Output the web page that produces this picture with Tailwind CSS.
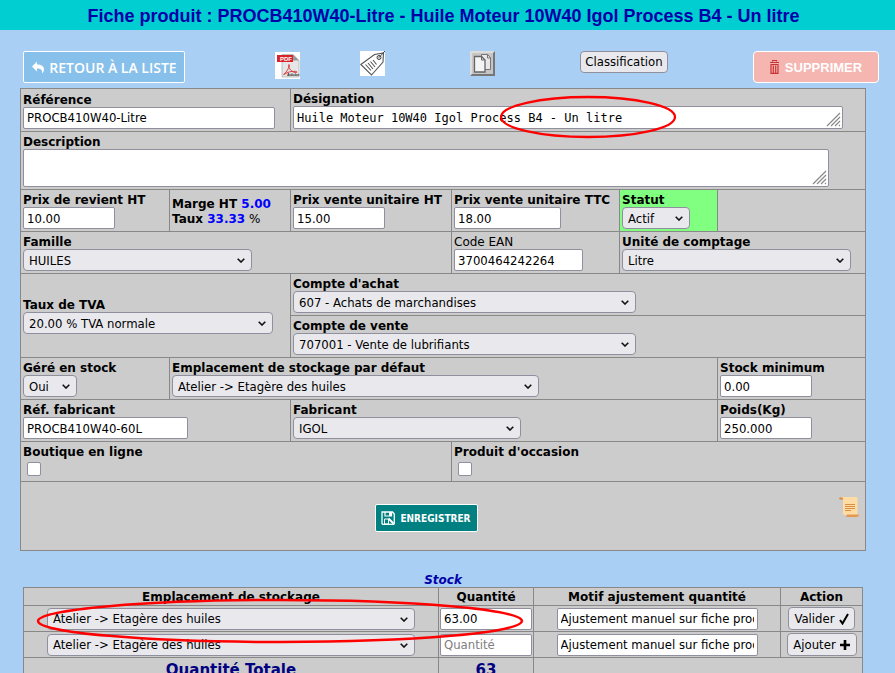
<!DOCTYPE html>
<html lang="fr">
  <head>
    <meta charset="UTF-8" />
    <meta name="viewport" content="width=device-width, initial-scale=1.0" />
    <title>Fiche produit</title>
    <script src="https://cdn.jsdelivr.net/npm/@tailwindcss/browser@4"></script>
    <style>
      body {
        font-family: 'DejaVu Sans', Verdana, sans-serif;
      }
      input,
      select,
      .btn {
        font-family: 'DejaVu Sans Condensed', Tahoma, sans-serif;
      }
      textarea {
        font-family: 'DejaVu Sans Mono', monospace;
      }
    </style>
  </head>
  <body class="relative min-h-screen overflow-x-hidden bg-[#a9cff5] text-[12px] leading-[15px] text-black">
    <!-- symboles communs -->
    <svg class="hidden">
      <symbol id="chevron" viewBox="0 0 8 5">
        <path d="M.7 .7L4 4l3.300-3.300" fill="none" stroke="#111" stroke-width="1.600" />
      </symbol>
      <symbol id="grip" viewBox="0 0 15 15">
        <path d="M1 14L14 1M5 14l9-9M9 14l5-5M13 14l1-1" fill="none" stroke="#888" stroke-width="1.200" />
      </symbol>
    </svg>

    <h1 class="h-[30px] bg-[#00ced1] pr-2 text-center font-['Liberation_Sans'] text-[18px] leading-[32px] font-bold text-[#0000a8]">
      Fiche produit : PROCB410W40-Litre - Huile Moteur 10W40 Igol Process B4 - Un litre
    </h1>

    <!-- Barre d'actions -->
    <nav class="mt-[21px] mr-4 ml-[23px] grid grid-cols-[252px_85px_110px_110px_1fr_126px] items-start">
      <a href="#" class="flex h-8 w-[162px] items-center justify-center gap-1 rounded-[2px] border border-white bg-[#87c0ea] font-['Open_Sans'] text-[14px] font-semibold whitespace-nowrap text-white">
        <svg class="h-[14px] w-[14px] shrink-0" viewBox="0 0 14 14">
          <path d="M6 1.500v3c4.500 0 7 1.500 7 5 0 1.700-.8 3-2 4 .6-3.400-.9-5-5-5v3L1 6.500z" fill="#fff" />
        </svg>
        RETOUR À LA LISTE
      </a>
      <a href="#" aria-label="PDF" class="mt-px block h-[27px] w-[25px]">
        <svg width="25" height="27" viewBox="0 0 25 27">
          <rect width="25" height="27" fill="#fff" />
          <path d="M7 2.500h11l6 6V25H7z" fill="#e6e6e6" stroke="#aaa" stroke-width=".7" />
          <path d="M18 2.500v6h6z" fill="#999" />
          <rect x="2" y="3" width="16" height="7" fill="#d8232a" />
          <text x="5" y="9" font-family="Liberation Sans" font-size="6" font-weight="bold" fill="#fff">PDF</text>
          <path d="M8.500 22.500c2-1 5-5.500 5.800-8.500.5-2-1-2-.7 0 .5 3 3 6 6.400 6.500 2.500.3 3-1 0-1.200-4-.2-8 1-11 3.200z" fill="none" stroke="#d8323a" stroke-width=".9" />
          <text x="12" y="24" font-family="Liberation Sans" font-size="4" font-weight="bold" fill="#333">Adobe</text>
        </svg>
      </a>
      <a href="#" aria-label="Étiquette" class="block h-[25px] w-[25px]">
        <svg width="25" height="25" viewBox="0 0 25 25">
          <rect width="25" height="25" fill="#fff" />
          <path d="M.8 13.500L14.500 3.500l9-1.500-.5 9L11.500 24z" fill="#fff" stroke="#555" stroke-width="1.100" />
          <path d="M5.500 13.500l5.500 6M8 12l5 6M10.500 10.500l4.500 5.500M13 9l3.500 4.500" stroke="#555" stroke-width="1.100" />
          <circle cx="19" cy="6.500" r="2" fill="#ddd" stroke="#444" />
          <path d="M19 6.500L25 0" stroke="#444" />
        </svg>
      </a>
      <a href="#" aria-label="Dupliquer" class="block h-[25px] w-[25px]">
        <svg width="25" height="25" viewBox="0 0 25 25">
          <rect width="25" height="25" fill="#777" />
          <path d="M0 0h25l-2 2H2v21l-2 2z" fill="#ddd" />
          <rect x="2" y="2" width="21" height="21" fill="#c6c6c6" />
          <path d="M11.500 3.500h6l3 3v12h-9z" fill="#e8e8e8" stroke="#777" />
          <path d="M17.500 3.500v3.500h3" fill="none" stroke="#777" />
          <path d="M4.500 5.500h7l3.500 3.500v12H4.500z" fill="#f4f4f4" stroke="#666" stroke-width="1.300" />
          <path d="M11.500 5.500V9H15" fill="none" stroke="#666" />
        </svg>
      </a>
      <div>
        <button class="btn block h-[22px] w-[88px] rounded-[4px] border border-[#8f8f9d] bg-[#e9e9ed] text-[13px] leading-[20px]">Classification</button>
      </div>
      <button class="flex h-8 items-center justify-center gap-[6px] rounded-[4px] border border-white bg-[#f5b5b1] font-['Liberation_Sans'] text-[13px] font-bold text-white">
        <svg class="h-[14px] w-[9px]" viewBox="0 0 9 14">
          <path d="M2.500 1.500V.5h4v1M0 2.500h9M.5 4.500h8" fill="none" stroke="#c93434" stroke-width="1.200" />
          <path d="M1 5v8.400h7V5M3.300 5.500v7.500M5.700 5.500v7.500" fill="none" stroke="#c93434" stroke-width="1.200" />
        </svg>
        SUPPRIMER
      </button>
    </nav>

    <!-- Fiche -->
    <form class="mt-[5px] mr-[29px] ml-5">
      <table class="w-full table-fixed border-collapse bg-[#ccc] [&_input]:block [&_label]:block [&_label]:h-[15px] [&_label]:leading-[17px] [&_label]:font-bold [&_label]:whitespace-nowrap [&_select]:block [&_td]:border [&_td]:border-[#888] [&_td]:p-[2px] [&_textarea]:block">
        <colgroup>
          <col class="w-[149px]" />
          <col class="w-[121px]" />
          <col class="w-[161px]" />
          <col class="w-[168px]" />
          <col class="w-[98px]" />
          <col />
        </colgroup>
        <tr>
          <td colspan="2">
            <label for="reference">Référence</label>
            <input id="reference" value="PROCB410W40-Litre" class="h-[22px] w-[252px] rounded-[2px] border border-[#8f8f9d] bg-white px-[3px] text-[13px]" />
          </td>
          <td colspan="4">
            <label for="designation">Désignation</label>
            <div class="relative w-[550px]">
              <textarea id="designation" rows="1" class="h-[23px] w-full resize-none overflow-hidden rounded-[2px] border border-[#8f8f9d] bg-white px-[3px] pt-1 text-[12px] leading-[15px]">Huile Moteur 10W40 Igol Process B4 - Un litre</textarea>
              <svg class="pointer-events-none absolute right-[2px] bottom-[2px] h-[15px] w-[15px]"><use href="#grip" /></svg>
            </div>
          </td>
        </tr>
        <tr>
          <td colspan="6">
            <label for="description">Description</label>
            <div class="relative w-[806px]">
              <textarea id="description" rows="2" class="h-[38px] w-full resize-none overflow-hidden rounded-[2px] border border-[#8f8f9d] bg-white px-[3px] pt-1 text-[12px] leading-[15px]"></textarea>
              <svg class="pointer-events-none absolute right-[2px] bottom-[2px] h-[15px] w-[15px]"><use href="#grip" /></svg>
            </div>
          </td>
        </tr>
        <tr>
          <td>
            <label for="revient">Prix de revient HT</label>
            <input id="revient" value="10.00" class="h-[22px] w-[92px] rounded-[2px] border border-[#8f8f9d] bg-white px-[3px] text-[13px]" />
          </td>
          <td class="pt-1!">
            <b>Marge HT <span class="text-[#0000ff]">5.00</span></b><br />
            <b>Taux <span class="text-[#0000ff]">33.33</span></b> %
          </td>
          <td>
            <label for="venteht">Prix vente unitaire HT</label>
            <input id="venteht" value="15.00" class="h-[22px] w-[92px] rounded-[2px] border border-[#8f8f9d] bg-white px-[3px] text-[13px]" />
          </td>
          <td>
            <label for="ventettc">Prix vente unitaire TTC</label>
            <input id="ventettc" value="18.00" class="h-[22px] w-[107px] rounded-[2px] border border-[#8f8f9d] bg-white px-[3px] text-[13px]" />
          </td>
          <td class="bg-[#80ff80]">
            <label for="statut">Statut</label>
            <div class="relative w-[68px]">
              <select id="statut" class="h-[22px] w-full appearance-none rounded-[4px] border border-[#8f8f9d] bg-[#e9e9ed] px-[5px] text-[13px]"><option>Actif</option></select>
              <svg class="pointer-events-none absolute top-[9px] right-[7px] h-[5px] w-[8px]"><use href="#chevron" /></svg>
            </div>
          </td>
          <td></td>
        </tr>
        <tr>
          <td colspan="3">
            <label for="famille">Famille</label>
            <div class="relative w-[229px]">
              <select id="famille" class="h-[22px] w-full appearance-none rounded-[4px] border border-[#8f8f9d] bg-[#e9e9ed] px-[5px] text-[13px]"><option>HUILES</option></select>
              <svg class="pointer-events-none absolute top-[9px] right-[7px] h-[5px] w-[8px]"><use href="#chevron" /></svg>
            </div>
          </td>
          <td>
            <label for="ean" class="font-normal!">Code EAN</label>
            <input id="ean" value="3700464242264" class="h-[22px] w-[129px] rounded-[2px] border border-[#8f8f9d] bg-white px-[3px] text-[13px]" />
          </td>
          <td colspan="2">
            <label for="unite">Unité de comptage</label>
            <div class="relative w-[229px]">
              <select id="unite" class="h-[22px] w-full appearance-none rounded-[4px] border border-[#8f8f9d] bg-[#e9e9ed] px-[5px] text-[13px]"><option>Litre</option></select>
              <svg class="pointer-events-none absolute top-[9px] right-[7px] h-[5px] w-[8px]"><use href="#chevron" /></svg>
            </div>
          </td>
        </tr>
        <tr>
          <td colspan="2" rowspan="2">
            <label for="tva">Taux de TVA</label>
            <div class="relative w-[250px]">
              <select id="tva" class="h-[22px] w-full appearance-none rounded-[4px] border border-[#8f8f9d] bg-[#e9e9ed] px-[5px] text-[13px]"><option>20.00 % TVA normale</option></select>
              <svg class="pointer-events-none absolute top-[9px] right-[7px] h-[5px] w-[8px]"><use href="#chevron" /></svg>
            </div>
          </td>
          <td colspan="4">
            <label for="achat">Compte d'achat</label>
            <div class="relative w-[343px]">
              <select id="achat" class="h-[22px] w-full appearance-none rounded-[4px] border border-[#8f8f9d] bg-[#e9e9ed] px-[5px] text-[13px]"><option>607 - Achats de marchandises</option></select>
              <svg class="pointer-events-none absolute top-[9px] right-[7px] h-[5px] w-[8px]"><use href="#chevron" /></svg>
            </div>
          </td>
        </tr>
        <tr>
          <td colspan="4">
            <label for="vente">Compte de vente</label>
            <div class="relative w-[343px]">
              <select id="vente" class="h-[22px] w-full appearance-none rounded-[4px] border border-[#8f8f9d] bg-[#e9e9ed] px-[5px] text-[13px]"><option>707001 - Vente de lubrifiants</option></select>
              <svg class="pointer-events-none absolute top-[9px] right-[7px] h-[5px] w-[8px]"><use href="#chevron" /></svg>
            </div>
          </td>
        </tr>
        <tr>
          <td>
            <label for="gere">Géré en stock</label>
            <div class="relative w-[54px]">
              <select id="gere" class="h-[22px] w-full appearance-none rounded-[4px] border border-[#8f8f9d] bg-[#e9e9ed] px-[5px] text-[13px]"><option>Oui</option></select>
              <svg class="pointer-events-none absolute top-[9px] right-[7px] h-[5px] w-[8px]"><use href="#chevron" /></svg>
            </div>
          </td>
          <td colspan="4">
            <label for="emplacement">Emplacement de stockage par défaut</label>
            <div class="relative w-[367px]">
              <select id="emplacement" class="h-[22px] w-full appearance-none rounded-[4px] border border-[#8f8f9d] bg-[#e9e9ed] px-[5px] text-[13px]"><option>Atelier -&gt; Etagère des huiles</option></select>
              <svg class="pointer-events-none absolute top-[9px] right-[7px] h-[5px] w-[8px]"><use href="#chevron" /></svg>
            </div>
          </td>
          <td>
            <label for="stockmin">Stock minimum</label>
            <input id="stockmin" value="0.00" class="h-[22px] w-[92px] rounded-[2px] border border-[#8f8f9d] bg-white px-[3px] text-[13px]" />
          </td>
        </tr>
        <tr>
          <td colspan="2">
            <label for="reffab">Réf. fabricant</label>
            <input id="reffab" value="PROCB410W40-60L" class="h-[22px] w-[165px] rounded-[2px] border border-[#8f8f9d] bg-white px-[3px] text-[13px]" />
          </td>
          <td colspan="3">
            <label for="fabricant">Fabricant</label>
            <div class="relative w-[228px]">
              <select id="fabricant" class="h-[22px] w-full appearance-none rounded-[4px] border border-[#8f8f9d] bg-[#e9e9ed] px-[5px] text-[13px]"><option>IGOL</option></select>
              <svg class="pointer-events-none absolute top-[9px] right-[7px] h-[5px] w-[8px]"><use href="#chevron" /></svg>
            </div>
          </td>
          <td>
            <label for="poids">Poids(Kg)</label>
            <input id="poids" value="250.000" class="h-[22px] w-[92px] rounded-[2px] border border-[#8f8f9d] bg-white px-[3px] text-[13px]" />
          </td>
        </tr>
        <tr>
          <td colspan="3">
            <label for="boutique">Boutique en ligne</label>
            <input id="boutique" type="checkbox" class="m-[3px] ml-1 h-[14px] w-[14px] appearance-none rounded-[2px] border border-[#8f8f9d] bg-white" />
          </td>
          <td colspan="3">
            <label for="occasion">Produit d'occasion</label>
            <input id="occasion" type="checkbox" class="m-[3px] ml-1 h-[14px] w-[14px] appearance-none rounded-[2px] border border-[#8f8f9d] bg-white" />
          </td>
        </tr>
        <tr>
          <td colspan="6">
            <div class="flex h-16">
              <div class="flex flex-1 items-center justify-center pt-1">
                <button type="button" class="btn flex h-7 w-[103px] items-center justify-center gap-[5px] rounded-[2px] border border-white bg-[#008080] text-[10px] font-bold text-white">
                  <svg class="h-[14px] w-[14px] shrink-0" viewBox="0 0 14 14">
                    <path d="M1 13.300V1h10.500L13.300 3v10.300" fill="none" stroke="#fff" stroke-width="1.300" />
                    <path d="M1 13.300h12.300" stroke="#fff" stroke-width="1.300" />
                    <path d="M4 1v4h6.500V1" fill="none" stroke="#fff" stroke-width="1.200" />
                    <path d="M8 1h2.500v4H8z" fill="#fff" />
                    <path d="M3.500 8h4v5h-4z" fill="none" stroke="#fff" />
                    <path d="M7.500 7.500l5 5" stroke="#fff" stroke-width="2" />
                  </svg>
                  ENREGISTRER
                </button>
              </div>
              <a href="#" aria-label="Historique" class="mt-[13px] mr-1 ml-[10px] block h-5 w-5">
                <svg width="20" height="20" viewBox="0 0 20 20">
                  <path d="M2 0h15c1 0 1.500.6 1.500 1.500V18H6c-1.500 0-2-1-2-2V2z" fill="#ffdca4" />
                  <path d="M0 1.500C0 0 4 0 4 1.500V2.500H1z" fill="#d6873c" />
                  <path d="M8 17.500h12c0 1.700-1 2.500-2.500 2.500H6c1.300 0 2-1 2-2.500z" fill="#e39a50" />
                  <path d="M6 7.500h10M6 9.500h10M6 11.500h10M6 13.500h6" stroke="#d98f45" />
                </svg>
              </a>
            </div>
          </td>
        </tr>
      </table>
    </form>

    <!-- Stock -->
    <section class="mt-[21px] mr-8 ml-[23px] pb-4">
      <h2 class="h-[15px] text-center text-[12px] leading-[17px] font-bold text-[#0000a8] italic">Stock</h2>
      <table class="w-full table-fixed border-collapse bg-[#ccc] text-center [&_td]:border [&_td]:border-[#888] [&_td]:p-px [&_th]:border [&_th]:border-[#888] [&_th]:px-px [&_th]:pt-[2px]">
        <colgroup>
          <col class="w-[415px]" />
          <col class="w-[95px]" />
          <col />
          <col class="w-[82px]" />
        </colgroup>
        <tr>
          <th>Emplacement de stockage</th>
          <th>Quantité</th>
          <th>Motif ajustement quantité</th>
          <th>Action</th>
        </tr>
        <tr>
          <td>
            <div class="relative mx-auto w-[368px]">
              <select aria-label="Emplacement de stockage" class="block h-[22px] w-full appearance-none rounded-[4px] border border-[#8f8f9d] bg-[#e9e9ed] px-[5px] text-[13px]"><option>Atelier -&gt; Etagère des huiles</option></select>
              <svg class="pointer-events-none absolute top-[9px] right-[7px] h-[5px] w-[8px]"><use href="#chevron" /></svg>
            </div>
          </td>
          <td><input aria-label="Quantité" value="63.00" class="mx-auto block h-[22px] w-[92px] rounded-[2px] border border-[#8f8f9d] bg-white px-[3px] text-[13px]" /></td>
          <td><input aria-label="Motif" value="Ajustement manuel sur fiche produit" class="mx-auto block h-[22px] w-[201px] rounded-[2px] border border-[#8f8f9d] bg-white px-[3px] text-[13px]" /></td>
          <td>
            <button class="btn mx-auto flex h-[23px] w-[67px] items-center justify-center gap-1 rounded-[4px] border border-[#8f8f9d] bg-[#e9e9ed] text-[13px]">
              Valider
              <svg class="h-3 w-[10px] shrink-0" viewBox="0 0 10 12"><path d="M1 7l2.500 3.500L9 1" fill="none" stroke="#000" stroke-width="2" /></svg>
            </button>
          </td>
        </tr>
        <tr>
          <td>
            <div class="relative mx-auto w-[368px]">
              <select aria-label="Emplacement à ajouter" class="block h-[22px] w-full appearance-none rounded-[4px] border border-[#8f8f9d] bg-[#e9e9ed] px-[5px] text-[13px]"><option>Atelier -&gt; Etagère des huiles</option></select>
              <svg class="pointer-events-none absolute top-[9px] right-[7px] h-[5px] w-[8px]"><use href="#chevron" /></svg>
            </div>
          </td>
          <td><input aria-label="Quantité à ajouter" placeholder="Quantité" class="mx-auto block h-[22px] w-[92px] rounded-[2px] border border-[#8f8f9d] bg-white px-[3px] text-[13px] placeholder:text-[#808080]" /></td>
          <td><input aria-label="Motif de l'ajout" value="Ajustement manuel sur fiche produit" class="mx-auto block h-[22px] w-[201px] rounded-[2px] border border-[#8f8f9d] bg-white px-[3px] text-[13px]" /></td>
          <td>
            <button class="btn mx-auto flex h-[23px] w-[70px] items-center justify-center gap-1 rounded-[4px] border border-[#8f8f9d] bg-[#e9e9ed] text-[13px]">
              Ajouter
              <svg class="h-[10px] w-[10px] shrink-0" viewBox="0 0 10 10"><path d="M5 0v10M0 5h10" stroke="#000" stroke-width="2.600" /></svg>
            </button>
          </td>
        </tr>
        <tr class="text-[15px] leading-[22px] font-bold text-[#000080]">
          <td>Quantité Totale</td>
          <td>63</td>
          <td colspan="2"></td>
        </tr>
      </table>
    </section>

    <!-- Annotations -->
    <svg class="pointer-events-none absolute top-[95px] left-[500px]" width="178" height="44">
      <ellipse cx="88" cy="22" rx="87" ry="20" fill="none" stroke="#f00" stroke-width="2.300" />
    </svg>
    <svg class="pointer-events-none absolute top-[598px] left-[37px]" width="487" height="47">
      <ellipse cx="243" cy="23" rx="242" ry="21" fill="none" stroke="#f00" stroke-width="2.500" />
    </svg>
  </body>
</html>
